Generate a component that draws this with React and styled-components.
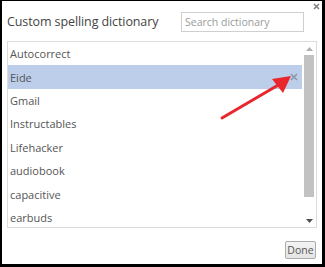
import React from "react";
import styled, { createGlobalStyle } from "styled-components";

const Global = createGlobalStyle`
  html, body { margin: 0; padding: 0; background: #000; }
  * { box-sizing: border-box; }
`;

const Frame = styled.div`
  position: relative;
  width: 325px;
  height: 267px;
  border-style: solid;
  border-color: #000;
  border-width: 1px 3px 3px 2px;
  background: #fff;
  font-family: "Open Sans", "Noto Sans", sans-serif;
  color: #444;
  display: flex;
  flex-direction: column;
`;

const CloseX = styled.svg`
  position: absolute;
  top: 2px;
  right: 2px;
`;

const Header = styled.div`
  display: flex;
  align-items: center;
  justify-content: space-between;
  padding: 11px 18px 9px 5px;
`;

const Title = styled.div`
  font-size: 12.5px;
  color: #444;
  letter-spacing: -0.1px;
  line-height: 20px;
`;

const Search = styled.input`
  width: 123px;
  height: 20px;
  border: 1px solid #cfcfcf;
  padding: 0 3px;
  font-family: inherit;
  font-size: 10.5px;
  color: #333;
  outline: none;
  &::placeholder { color: #9a9a9a; }
`;

const ListBox = styled.div`
  margin: 0 5px;
  height: 187px;
  border: 1px solid #dcdcdc;
  display: flex;
  overflow: hidden;
`;

const Rows = styled.div`
  flex: 1;
  display: flex;
  flex-direction: column;
`;

const Row = styled.div`
  height: 23.43px;
  flex: none;
  display: flex;
  align-items: center;
  justify-content: space-between;
  padding: 0 4px 0 2px;
  font-size: 11px;
  color: #555;
  background: ${(p) => (p.$selected ? "#bccee9" : "transparent")};
`;

const Scrollbar = styled.div`
  width: 14px;
  display: flex;
  flex-direction: column;
  background: #fff;
`;

const ArrowBtn = styled.div`
  height: 13px;
  display: flex;
  align-items: center;
  justify-content: center;
`;

const Track = styled.div`
  flex: 1;
  padding: 0 2px;
`;

const Thumb = styled.div`
  height: 142px;
  background: #c2c2c2;
`;

const Footer = styled.div`
  display: flex;
  justify-content: flex-end;
  padding: 13px 6px 0 0;
`;

const Button = styled.button`
  width: 31px;
  height: 18px;
  padding: 0;
  border: 1px solid #acacac;
  border-radius: 2px;
  background: linear-gradient(#f4f4f4, #e4e4e4);
  font-family: inherit;
  font-size: 10.5px;
  color: #555;
`;

const Overlay = styled.svg`
  position: absolute;
  left: -2px;
  top: -1px;
  pointer-events: none;
`;

const words = [
  "Autocorrect",
  "Eide",
  "Gmail",
  "Instructables",
  "Lifehacker",
  "audiobook",
  "capacitive",
  "earbuds",
];

export default function App() {
  return (
    <>
      <Global />
      <Frame>
        <CloseX width="7" height="7" viewBox="0 0 7 7">
          <path d="M1 1L6 6M6 1L1 6" stroke="#808080" strokeWidth="1.5" />
        </CloseX>
        <Header>
          <Title>Custom spelling dictionary</Title>
          <Search placeholder="Search dictionary" />
        </Header>
        <ListBox>
          <Rows>
            {words.map((w, i) => (
              <Row key={w} $selected={i === 1}>
                <span>{w}</span>
                {i === 1 && (
                  <svg width="8" height="8" viewBox="0 0 8 8">
                    <path d="M1 1L7 7M7 1L1 7" stroke="#8a97a8" strokeWidth="1.6" />
                  </svg>
                )}
              </Row>
            ))}
          </Rows>
          <Scrollbar>
            <ArrowBtn>
              <svg width="7" height="4" viewBox="0 0 7 4">
                <path d="M0 4L3.5 0L7 4Z" fill="#b0b0b0" />
              </svg>
            </ArrowBtn>
            <Track>
              <Thumb />
            </Track>
            <ArrowBtn>
              <svg width="7" height="4" viewBox="0 0 7 4">
                <path d="M0 0L3.5 4L7 0Z" fill="#505050" />
              </svg>
            </ArrowBtn>
          </Scrollbar>
        </ListBox>
        <Footer>
          <Button>Done</Button>
        </Footer>
        <Overlay width="325" height="267" viewBox="0 0 325 267">
          <line x1="222" y1="118" x2="280" y2="84" stroke="#e8262b" strokeWidth="3" strokeLinecap="round" />
          <path d="M291 76L272 79L283 93Z" fill="#e8262b" />
        </Overlay>
      </Frame>
    </>
  );
}
